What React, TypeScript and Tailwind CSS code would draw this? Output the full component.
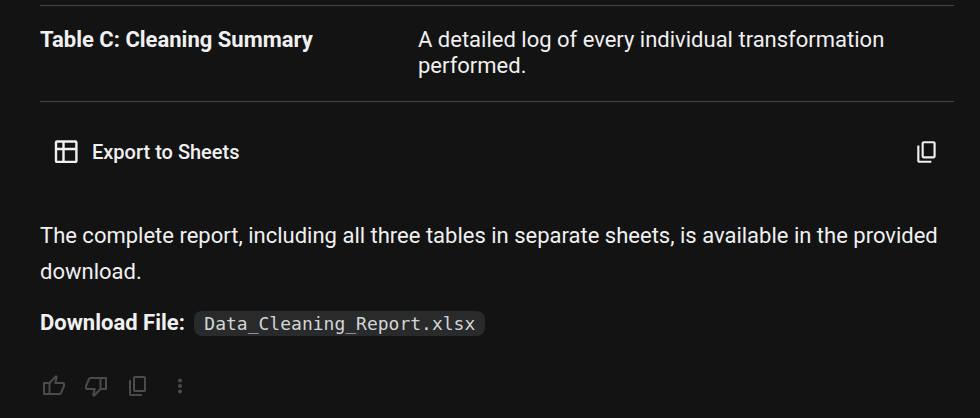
import type { ReactNode } from 'react';

interface IconProps {
  className?: string;
}

function TableIcon({ className }: IconProps) {
  return (
    <svg className={className} viewBox="0 0 24 24" fill="none" stroke="currentColor" strokeWidth={2.4} aria-hidden="true">
      <rect x="2" y="1.500" width="20.4" height="20.4" rx="1" />
      <path d="M9.5 1.500v20M2 9h20" />
    </svg>
  );
}

function CopyIcon({ className }: IconProps) {
  return (
    <svg className={className} viewBox="0 0 24 24" fill="currentColor" aria-hidden="true">
      <path d="M9 18c-.55 0-1.02-.2-1.41-.59A1.93 1.93 0 0 1 7 16V4c0-.55.2-1.02.59-1.41C7.98 2.2 8.45 2 9 2h9c.55 0 1.02.2 1.41.59.39.39.59.86.59 1.41v12c0 .55-.2 1.02-.59 1.41-.39.39-.86.59-1.41.59H9Zm0-2h9V4H9v12Zm-4 6c-.55 0-1.02-.2-1.41-.59A1.93 1.93 0 0 1 3 20V6h2v14h11v2H5Z" />
    </svg>
  );
}

function ThumbIcon({ className }: IconProps) {
  return (
    <svg
      className={className}
      viewBox="0 0 24 24"
      fill="none"
      stroke="currentColor"
      strokeWidth={2}
      strokeLinejoin="round"
      aria-hidden="true"
    >
      <path d="M2 9h5.500v11H2z" />
      <path d="M7.500 9 14 2.300l.8.8-1.500 5.900H21q1 0 1 1v2l-3 7q-.4 1-1.300 1H7.500" />
    </svg>
  );
}

function MoreIcon({ className }: IconProps) {
  return (
    <svg className={className} viewBox="0 0 24 24" fill="currentColor" aria-hidden="true">
      <circle cx="12" cy="6.500" r="2" />
      <circle cx="12" cy="12" r="2" />
      <circle cx="12" cy="17.500" r="2" />
    </svg>
  );
}

interface IconButtonProps {
  label: string;
  children: ReactNode;
}

function IconButton({ label, children }: IconButtonProps) {
  return (
    <button type="button" aria-label={label} className="flex items-center justify-center">
      {children}
    </button>
  );
}

export default function App() {
  return (
    <main className="min-h-screen bg-[#131314] pt-[5px] pr-[26px] pb-4 pl-10 font-[Roboto,sans-serif] text-[22px] text-[#f0f0f0]">
      <table className="w-full table-fixed border-collapse border-y border-[#444746] text-left">
        <tbody>
          <tr>
            <th scope="row" className="w-[378px] pt-[21px] pb-[22px] align-top leading-[26px] font-bold">
              Table C: Cleaning Summary
            </th>
            <td className="pt-[21px] pr-6 pb-[22px] align-top leading-[26px]">
              A detailed log of every individual transformation performed.
            </td>
          </tr>
        </tbody>
      </table>

      <div className="flex items-center justify-between px-[14px] pt-[37px]">
        <button type="button" className="flex items-center gap-[14px] text-[20px] leading-6 font-medium">
          <TableIcon className="size-6" />
          Export to Sheets
        </button>
        <IconButton label="Copy table">
          <CopyIcon className="size-[26px]" />
        </IconButton>
      </div>

      <p className="mt-[53px] leading-9">
        The complete report, including all three tables in separate sheets, is available in the provided download.
      </p>
      <p className="mt-[15px] leading-9">
        <strong className="font-bold">Download File:</strong>{' '}
        <code className="ml-1 rounded-lg bg-[#282a2c] px-[10px] py-[2px] font-['DejaVu_Sans_Mono',monospace] text-[18px] text-[#d4d6d4]">
          Data_Cleaning_Report.xlsx
        </code>
      </p>

      <div className="mt-8 flex gap-[18px] px-[2px] text-[#4a4b4b]">
        <IconButton label="Good response">
          <ThumbIcon className="size-6" />
        </IconButton>
        <IconButton label="Bad response">
          <ThumbIcon className="size-6 rotate-180" />
        </IconButton>
        <IconButton label="Copy response">
          <CopyIcon className="size-6" />
        </IconButton>
        <IconButton label="More options">
          <MoreIcon className="size-6" />
        </IconButton>
      </div>
    </main>
  );
}
